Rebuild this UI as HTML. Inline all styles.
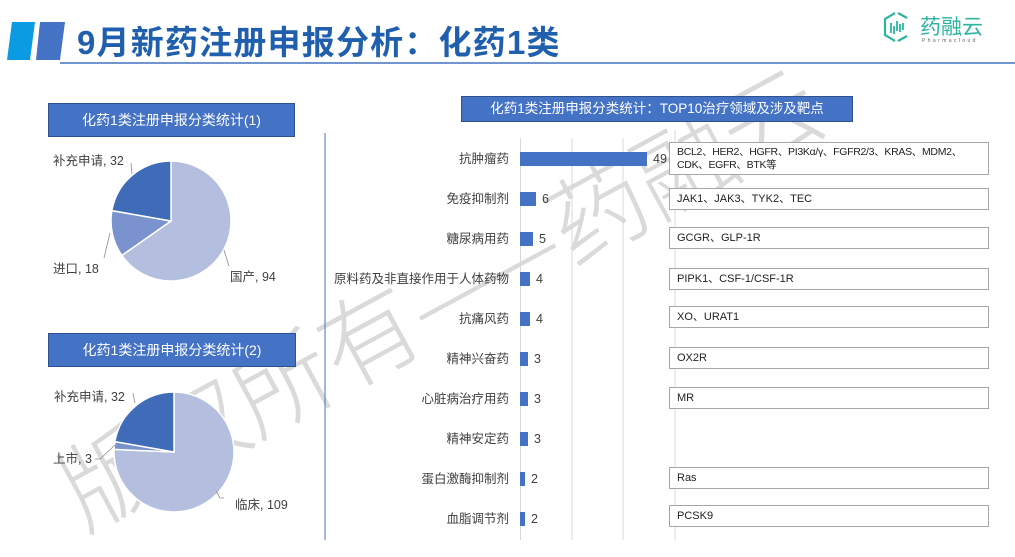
<!DOCTYPE html>
<html><head><meta charset="utf-8"><style>
*{margin:0;padding:0;box-sizing:border-box}
body{width:1015px;height:550px;background:#fff;position:relative;overflow:hidden;font-family:"Liberation Sans","Noto Sans CJK SC",sans-serif;color:#404040}
.abs{position:absolute}
.tbox{position:absolute;background:#4472c4;color:#fff;border:1px solid #2f528f;text-align:center;font-size:14px}
.lbl{position:absolute;font-size:12.5px;white-space:nowrap}
.cat{position:absolute;right:506px;font-size:12.5px;white-space:nowrap;line-height:16px}
.bar{position:absolute;left:520px;height:14px;background:#4472c4}
.val{position:absolute;font-size:12.5px;line-height:16px}
.rb{position:absolute;left:669px;width:320px;border:1.5px solid #a6a6a6;font-size:11px;color:#222;padding-left:7px;line-height:20px;background:#fff;white-space:nowrap}
.wm{position:absolute;font-size:98px;line-height:98px;height:98px;color:#dadada;white-space:nowrap;transform-origin:left bottom;transform:rotate(-28.5deg);left:88px;top:440px;font-family:"Noto Sans CJK SC",sans-serif;font-weight:300}
</style></head><body>
<div class="wm">版权所有——药融云</div>
<svg class="abs" style="left:0;top:0" width="1015" height="70">
<polygon points="12,22 35,22 30,60 7,60" fill="#0a9be3"/>
<polygon points="40,22 65,22 60,60 36,60" fill="#4472c4"/>
<line x1="60" y1="63" x2="1015" y2="63" stroke="#4472c4" stroke-width="1.5"/>
<g transform="translate(883,12)" fill="none" stroke="#2bb5a0" stroke-width="2.2">
<path d="M12 1 L2 7 L2 23 L12 29"/><path d="M15 1 L24 6"/><path d="M24 24 L15 29"/>
<g stroke-width="1.8"><line x1="8" y1="11" x2="8" y2="21"/><line x1="11" y1="14" x2="11" y2="22"/><line x1="14" y1="9" x2="14" y2="19"/><line x1="17" y1="12" x2="17" y2="20"/><line x1="20" y1="11" x2="20" y2="18"/></g>
</g>
<text x="920" y="34" font-size="21" fill="#2bb5a0" font-family="Noto Sans CJK SC,sans-serif">药融云</text>
<text x="922" y="42" font-size="5" fill="#666" letter-spacing="2.4" font-family="Liberation Sans">Pharmacloud</text>
</svg>
<div class="abs" style="left:77px;top:16px;font-size:33px;font-weight:bold;color:#1f5fae;font-family:'Liberation Sans','Noto Sans CJK SC',sans-serif;letter-spacing:1.2px">9月新药注册申报分析：化药1类</div>

<div class="tbox" style="left:48px;top:103px;width:247px;height:34px;line-height:32px">化药1类注册申报分类统计(1)</div>
<div class="tbox" style="left:48px;top:333px;width:248px;height:34px;line-height:32px">化药1类注册申报分类统计(2)</div>
<div class="tbox" style="left:461px;top:96px;width:392px;height:26px;line-height:24px;font-size:13.5px">化药1类注册申报分类统计：TOP10治疗领域及涉及靶点</div>

<svg class="abs" style="left:0;top:0" width="330" height="550">
<g stroke="#fff" stroke-width="1.5">
<path d="M171,221 L171,161 A60,60 0 1 1 121.85,255.4 Z" fill="#b4bfdf"/>
<path d="M171,221 L121.85,255.4 A60,60 0 0 1 111.9,210.6 Z" fill="#7a93cf"/>
<path d="M171,221 L111.9,210.6 A60,60 0 0 1 171,161 Z" fill="#3f6bb8"/>
<path d="M174,452 L174,392 A60,60 0 1 1 114.06,449.4 Z" fill="#b4bfdf"/>
<path d="M174,452 L114.06,449.4 A60,60 0 0 1 114.9,441.6 Z" fill="#7a93cf"/>
<path d="M174,452 L114.9,441.6 A60,60 0 0 1 174,392 Z" fill="#3f6bb8"/>
</g>
<g stroke="#8c8c8c" stroke-width="0.8" fill="none">
<path d="M131,163 L132,174"/><path d="M110,233 L104,258"/><path d="M224,250 L229,266"/>
<path d="M133,393 L135,403"/><path d="M115,445 L100,459 L95,459"/><path d="M216,491 L220,498 L224,498"/>
</g>
<line x1="325" y1="133" x2="325" y2="540" stroke="#4472c4" stroke-width="1"/>
</svg>
<div class="lbl" style="left:53px;top:150px">补充申请, 32</div>
<div class="lbl" style="left:53px;top:258px">进口, 18</div>
<div class="lbl" style="left:230px;top:266px">国产, 94</div>
<div class="lbl" style="left:54px;top:386px">补充申请, 32</div>
<div class="lbl" style="left:53px;top:448px">上市, 3</div>
<div class="lbl" style="left:235px;top:494px">临床, 109</div>

<svg class="abs" style="left:0;top:0" width="1015" height="550">
<g stroke="#d9d9d9" stroke-width="1">
<line x1="520.5" y1="138" x2="520.5" y2="540"/><line x1="572" y1="138" x2="572" y2="540"/><line x1="623" y1="138" x2="623" y2="540"/><line x1="675" y1="130" x2="675" y2="540"/>
</g>
</svg>

<div class="cat" style="top:151px">抗肿瘤药</div><div class="bar" style="top:152px;width:127px"></div><div class="val" style="left:653px;top:151px">49</div>
<div class="cat" style="top:191px">免疫抑制剂</div><div class="bar" style="top:192px;width:16px"></div><div class="val" style="left:542px;top:191px">6</div>
<div class="cat" style="top:231px">糖尿病用药</div><div class="bar" style="top:232px;width:13px"></div><div class="val" style="left:539px;top:231px">5</div>
<div class="cat" style="top:271px">原料药及非直接作用于人体药物</div><div class="bar" style="top:272px;width:10px"></div><div class="val" style="left:536px;top:271px">4</div>
<div class="cat" style="top:311px">抗痛风药</div><div class="bar" style="top:312px;width:10px"></div><div class="val" style="left:536px;top:311px">4</div>
<div class="cat" style="top:351px">精神兴奋药</div><div class="bar" style="top:352px;width:8px"></div><div class="val" style="left:534px;top:351px">3</div>
<div class="cat" style="top:391px">心脏病治疗用药</div><div class="bar" style="top:392px;width:8px"></div><div class="val" style="left:534px;top:391px">3</div>
<div class="cat" style="top:431px">精神安定药</div><div class="bar" style="top:432px;width:8px"></div><div class="val" style="left:534px;top:431px">3</div>
<div class="cat" style="top:471px">蛋白激酶抑制剂</div><div class="bar" style="top:472px;width:5px"></div><div class="val" style="left:531px;top:471px">2</div>
<div class="cat" style="top:511px">血脂调节剂</div><div class="bar" style="top:512px;width:5px"></div><div class="val" style="left:531px;top:511px">2</div>

<div class="rb" style="top:142px;height:33px;line-height:13px;padding-top:3px;font-size:10.5px;letter-spacing:-0.3px">BCL2、HER2、HGFR、PI3Kα/γ、FGFR2/3、KRAS、MDM2、<br>CDK、EGFR、BTK等</div>
<div class="rb" style="top:188px;height:22px">JAK1、JAK3、TYK2、TEC</div>
<div class="rb" style="top:227px;height:22px">GCGR、GLP-1R</div>
<div class="rb" style="top:268px;height:22px">PIPK1、CSF-1/CSF-1R</div>
<div class="rb" style="top:306px;height:22px">XO、URAT1</div>
<div class="rb" style="top:347px;height:22px">OX2R</div>
<div class="rb" style="top:387px;height:22px">MR</div>
<div class="rb" style="top:467px;height:22px">Ras</div>
<div class="rb" style="top:505px;height:22px">PCSK9</div>
</body></html>
